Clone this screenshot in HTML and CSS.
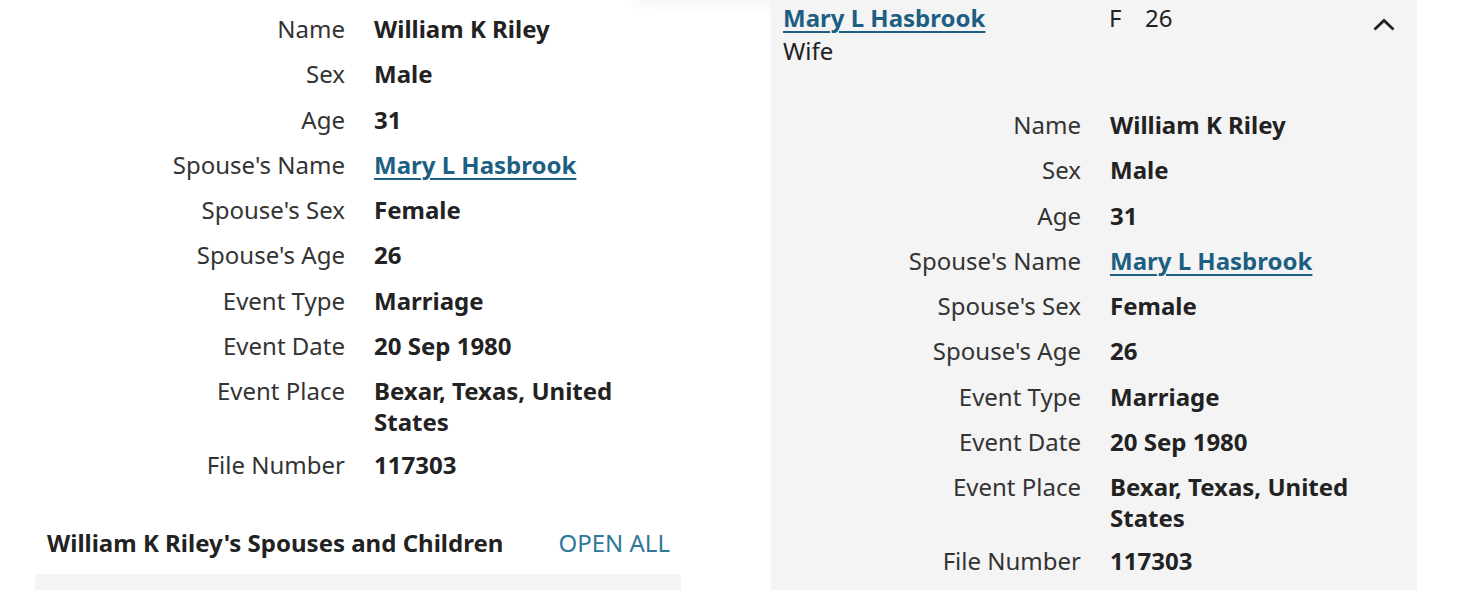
FILE: index.html
```html
<!DOCTYPE html>
<html lang="en">
<head>
<meta charset="utf-8">
<title>Record</title>
<link rel="stylesheet" href="styles.css">
</head>
<body>
<div class="page">
  <section class="col col-left">
    <div class="top-shadow"></div>
    <dl class="facts">
      <dt>Name</dt><dd>William K Riley</dd>
      <dt>Sex</dt><dd>Male</dd>
      <dt>Age</dt><dd>31</dd>
      <dt>Spouse's Name</dt><dd><a href="#" class="link">Mary L Hasbrook</a></dd>
      <dt>Spouse's Sex</dt><dd>Female</dd>
      <dt>Spouse's Age</dt><dd>26</dd>
      <dt>Event Type</dt><dd>Marriage</dd>
      <dt>Event Date</dt><dd>20 Sep 1980</dd>
      <dt>Event Place</dt><dd>Bexar, Texas, United States</dd>
      <dt>File Number</dt><dd>117303</dd>
    </dl>
    <div class="section-head">
      <h2>William K Riley's Spouses and Children</h2>
      <a href="#" class="open-all">OPEN ALL</a>
    </div>
    <div class="family-strip"></div>
  </section>
  <section class="col col-right">
    <div class="person-head">
      <div class="person-name">
        <a href="#" class="link">Mary L Hasbrook</a>
        <div class="relation">Wife</div>
      </div>
      <div class="person-sex">F</div>
      <div class="person-age">26</div>
      <button class="toggle" aria-label="Collapse">
        <svg width="22" height="14" viewBox="0 0 22 14"><path d="M2.5 11.5 L11 3.5 L19.5 11.5" fill="none" stroke="#222" stroke-width="2.8" stroke-linecap="square" stroke-linejoin="miter"/></svg>
      </button>
    </div>
    <dl class="facts">
      <dt>Name</dt><dd>William K Riley</dd>
      <dt>Sex</dt><dd>Male</dd>
      <dt>Age</dt><dd>31</dd>
      <dt>Spouse's Name</dt><dd><a href="#" class="link">Mary L Hasbrook</a></dd>
      <dt>Spouse's Sex</dt><dd>Female</dd>
      <dt>Spouse's Age</dt><dd>26</dd>
      <dt>Event Type</dt><dd>Marriage</dd>
      <dt>Event Date</dt><dd>20 Sep 1980</dd>
      <dt>Event Place</dt><dd>Bexar, Texas, United States</dd>
      <dt>File Number</dt><dd>117303</dd>
    </dl>
  </section>
</div>
</body>
</html>
```
FILE: styles.css
```css
html, body {
  margin: 0;
  padding: 0;
  background: #ffffff;
}
body {
  font-family: "Noto Sans", "Open Sans", sans-serif;
  color: #333333;
  width: 1472px;
  height: 590px;
  overflow: hidden;
}
.page {
  display: flex;
  gap: 90px;
  padding-left: 35px;
  height: 590px;
}
.col {
  width: 646px;
  flex: none;
  position: relative;
}
.col-left {
  display: flex;
  flex-direction: column;
  padding-top: 12px;
}
.col-right {
  background: #f4f4f4;
  padding-top: 1px;
}
.top-shadow {
  position: absolute;
  left: 600px;
  top: -40px;
  width: 160px;
  height: 40px;
  box-shadow: 0 4px 18px rgba(0, 0, 0, 0.05);
  border-radius: 8px;
}
.facts {
  display: grid;
  grid-template-columns: 310px 1fr;
  column-gap: 29px;
  row-gap: 11px;
  margin: 0;
  font-size: 24px;
}
.facts dt {
  text-align: right;
  line-height: 34.25px;
  color: #333333;
}
.facts dd {
  margin: 0;
  line-height: 31px;
  padding-top: 1px;
  font-weight: 700;
  color: #222222;
  max-width: 262px;
}
.link {
  color: #1d5f82;
  text-decoration: underline;
  text-underline-offset: 4px;
  text-decoration-thickness: 2px;
  font-weight: 700;
}
.section-head {
  display: flex;
  align-items: center;
  padding: 0 11px 0 12px;
  margin-top: 43px;
  height: 34px;
}
.section-head h2 {
  margin: 0;
  font-size: 24px;
  font-weight: 700;
  color: #222222;
  flex: 1;
}
.open-all {
  color: #2f7898;
  text-decoration: none;
  font-size: 24px;
}
.family-strip {
  margin-top: 15px;
  flex: 1;
  background: #f4f4f4;
  border-radius: 4px 4px 0 0;
}
.person-head {
  display: flex;
  align-items: flex-start;
  padding: 0 12px;
  font-size: 24px;
  line-height: 33px;
}
.person-name {
  width: 326px;
}
.relation {
  color: #222222;
}
.person-sex {
  width: 36px;
  color: #222222;
}
.person-age {
  flex: 1;
  color: #222222;
}
.toggle {
  background: none;
  border: 0;
  padding: 0;
  margin: 16px 10px 0 0;
  width: 22px;
  height: 14px;
  display: flex;
}
.col-right .facts {
  margin-top: 41px;
}
```
